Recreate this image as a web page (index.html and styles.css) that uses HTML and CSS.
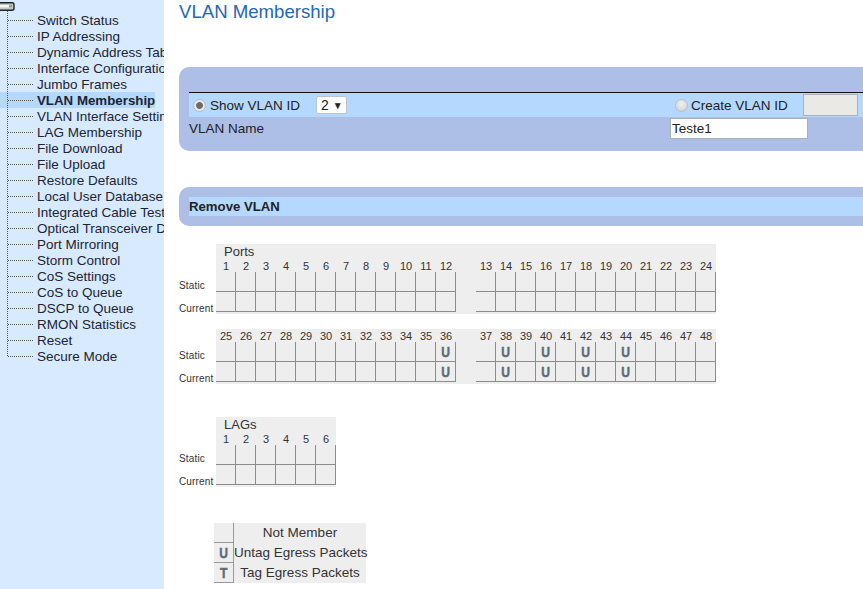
FILE: index.html
```html
<!DOCTYPE html>
<html lang="en">
<head>
<meta charset="utf-8">
<title>VLAN Membership</title>
<link rel="stylesheet" href="styles.css">
</head>
<body>
<div class="page">
  <nav class="sidebar">
    <svg class="root-icon" width="16" height="10" viewBox="0 0 16 10"><rect x="-3" y="0.8" width="17" height="7.4" rx="2" fill="#c4c8c4" stroke="#222" stroke-width="1.4"/><rect x="-1" y="3" width="13" height="2.4" fill="#f6f6f6"/><rect x="9" y="3" width="3" height="2.4" fill="#7fa58a"/></svg>
    <ul class="tree">
      <li class="item"><span class="branch"></span><span>Switch Status</span></li>
      <li class="item"><span class="branch"></span><span>IP Addressing</span></li>
      <li class="item"><span class="branch"></span><span>Dynamic Address Table</span></li>
      <li class="item"><span class="branch"></span><span>Interface Configuration</span></li>
      <li class="item"><span class="branch"></span><span>Jumbo Frames</span></li>
      <li class="item selected"><span class="branch"></span><span>VLAN Membership</span></li>
      <li class="item"><span class="branch"></span><span>VLAN Interface Settings</span></li>
      <li class="item"><span class="branch"></span><span>LAG Membership</span></li>
      <li class="item"><span class="branch"></span><span>File Download</span></li>
      <li class="item"><span class="branch"></span><span>File Upload</span></li>
      <li class="item"><span class="branch"></span><span>Restore Defaults</span></li>
      <li class="item"><span class="branch"></span><span>Local User Database</span></li>
      <li class="item"><span class="branch"></span><span>Integrated Cable Test</span></li>
      <li class="item"><span class="branch"></span><span>Optical Transceiver Diagnostics</span></li>
      <li class="item"><span class="branch"></span><span>Port Mirroring</span></li>
      <li class="item"><span class="branch"></span><span>Storm Control</span></li>
      <li class="item"><span class="branch"></span><span>CoS Settings</span></li>
      <li class="item"><span class="branch"></span><span>CoS to Queue</span></li>
      <li class="item"><span class="branch"></span><span>DSCP to Queue</span></li>
      <li class="item"><span class="branch"></span><span>RMON Statistics</span></li>
      <li class="item"><span class="branch"></span><span>Reset</span></li>
      <li class="item"><span class="branch"></span><span>Secure Mode</span></li>
    </ul>
  </nav>
  <main class="content">
    <h1 class="title">VLAN Membership</h1>

    <section class="panel panel-form">
      <div class="form-row form-row-top">
        <label class="field show-field"><input class="radio" type="radio" name="mode" checked><span>Show VLAN ID</span></label>
        <span class="fake-select">2 <span class="arrow">▼</span></span>
        <label class="field create-field"><input class="radio" type="radio" name="mode"><span>Create VLAN ID</span></label>
        <input class="id-input" type="text" disabled>
      </div>
      <div class="form-row form-row-name">
        <span class="name-label">VLAN Name</span>
        <input class="name-input" type="text" value="Teste1">
      </div>
    </section>

    <section class="panel panel-remove">
      <div class="remove-row">Remove VLAN</div>
    </section>

    <div class="matrix-row ports-top">
      <div class="labels"><span>Static</span><span>Current</span></div>
      <div class="matrix" id="ports1"></div>
    </div>
    <div class="matrix-row ports-bottom">
      <div class="labels"><span>Static</span><span>Current</span></div>
      <div class="matrix" id="ports2"></div>
    </div>
    <div class="matrix-row lags">
      <div class="labels"><span>Static</span><span>Current</span></div>
      <div class="matrix matrix-lag" id="lags"></div>
    </div>

    <div class="legend">
      <div class="swatch"></div><div class="legend-text">Not Member</div>
      <div class="swatch"><span class="glyph">U</span></div><div class="legend-text">Untag Egress Packets</div>
      <div class="swatch"><span class="glyph">T</span></div><div class="legend-text">Tag Egress Packets</div>
    </div>
  </main>
</div>
<script src="matrix.js"></script>
</body>
</html>
```
FILE: matrix.js
```js
function build(el, opts) {
  var html = '';
  if (opts.heading) html += '<div class="heading">' + opts.heading + '</div>';
  function line(fn) {
    opts.groups.forEach(function (g, gi) {
      if (gi) html += fn(null);
      g.forEach(function (n) { html += fn(n); });
    });
  }
  line(function (n) { return n === null ? '<div class="gap gap-num"></div>' : '<div class="num">' + n + '</div>'; });
  for (var r = 0; r < 2; r++) {
    line(function (n) {
      if (n === null) return '<div class="gap"></div>';
      var u = opts.untag && opts.untag.indexOf(n) >= 0;
      return '<div class="cell">' + (u ? '<span class="glyph">U</span>' : '') + '</div>';
    });
  }
  el.innerHTML = html;
}
function range(a, b) { var o = []; for (var i = a; i <= b; i++) o.push(i); return o; }
build(document.getElementById('ports1'), { heading: 'Ports', groups: [range(1, 12), range(13, 24)] });
build(document.getElementById('ports2'), { groups: [range(25, 36), range(37, 48)], untag: [36, 38, 40, 42, 44] });
build(document.getElementById('lags'), { heading: 'LAGs', groups: [range(1, 6)] });
```
FILE: styles.css
```css
* { box-sizing: border-box; }
html, body { margin: 0; padding: 0; height: 100%; overflow: hidden; background: #fff; }
body { font-family: "Liberation Sans", Arial, sans-serif; font-size: 13.5px; color: #222; }
.page { display: flex; width: 863px; height: 589px; overflow: hidden; }

.sidebar { flex: 0 0 164px; width: 164px; background: #d8eaff; overflow: hidden; color: #1c2430; }
.root-icon { display: block; margin-top: 2px; }
.tree { list-style: none; margin: 0; padding: 0; position: relative; }
.tree::before { content: ""; position: absolute; left: 7px; top: -1px; bottom: 8px; border-left: 1px dotted #555; }
.item { display: flex; align-items: center; height: 16px; width: max-content; white-space: nowrap; }
.branch { flex: none; width: 25px; margin: 0 4px 0 8px; border-bottom: 1px dotted #555; }
.selected { background: #b5d8ff; font-weight: 700; font-size: 13.3px; }

.content { flex: 1; min-width: 0; overflow: hidden; padding-left: 15px; }
.title { margin: 1px 0 0; height: 22px; font-size: 18.6px; line-height: 22px; font-weight: 400; color: #2468b4; white-space: nowrap; }

.panel { width: 760px; background: #adbfe6; border-radius: 10px 0 0 10px; padding-left: 10px; }
.panel-form { margin-top: 44px; height: 84px; padding-top: 25px; }
.form-row { display: flex; align-items: center; white-space: nowrap; }
.form-row-top { height: 25px; background: #b5d8ff; border-top: 1px solid #111; }
.form-row-name { height: 22px; }
.name-label { width: 481px; flex: none; }
.field { display: flex; align-items: center; }
.radio { appearance: none; -webkit-appearance: none; margin: 0; width: 13px; height: 13px; border-radius: 50%; border: 1px solid #b9bec4; background: radial-gradient(circle at 50% 35%, #f2f2f2, #c9ccd0); }
.radio:checked { background: radial-gradient(circle, #6a6a6a 0 3px, #e6e8ea 3.8px); }
.show-field { margin-left: 4px; width: 123px; gap: 4px; }
.fake-select { display: block; width: 31px; height: 18px; padding-left: 4px; line-height: 17px; font-size: 14px; background: #fff; border: 1px solid #bcc4cc; border-radius: 2px; }
.arrow { font-size: 10px; vertical-align: 1px; }
.create-field { margin-left: 328px; width: 128px; gap: 3px; }
.id-input { width: 55px; height: 22px; padding: 0; background: #ebe9e6; border: 1px solid #a9b1bb; }
.name-input { width: 138px; height: 21px; padding: 0 1px; font: inherit; color: #222; background: #fff; border: 1px solid #a9b1bb; }

.panel-remove { margin-top: 36px; height: 39px; padding-top: 10px; }
.remove-row { height: 19px; line-height: 19px; background: #b5d8ff; font-weight: 700; font-size: 13.2px; }

.matrix-row { display: flex; align-items: flex-end; }
.ports-top { margin-top: 18px; }
.ports-bottom { margin-top: 15px; }
.lags { margin-top: 33px; }
.labels { flex: 0 0 37px; display: flex; flex-direction: column; font-size: 10px; letter-spacing: .15px; color: #333; }
.labels span { height: 20px; line-height: 20px; white-space: nowrap; padding-top: 5px; }
.labels span:last-child { height: 23px; padding-top: 8px; }
.matrix { display: grid; grid-template-columns: repeat(25, 20px); background: #eee; padding-bottom: 2px; width: 500px; }
.matrix-lag { grid-template-columns: repeat(6, 20px); width: 120px; }
.heading { grid-column: 1 / -1; height: 15px; line-height: 15px; padding-left: 8px; font-size: 13px; color: #333; }
.num { height: 13px; line-height: 15px; font-size: 11px; text-align: center; color: #333; }
.gap { height: 20px; }
.gap-num { height: 13px; }
.cell { height: 20px; border-right: 1px solid #8c8c8c; border-bottom: 1px solid #8c8c8c; text-align: center; line-height: 19px; }
.glyph { display: inline-block; font-size: 15.5px; font-weight: 700; color: #5f6b75; transform: scaleX(.78); -webkit-text-stroke: .5px #5f6b75; }

.legend { margin: 36px 0 0 35px; display: grid; grid-template-columns: 20px 132px; grid-auto-rows: 20px; background: #eee; width: 152px; }
.swatch { border-right: 1px solid #9a9a9a; border-bottom: 1px solid #9a9a9a; text-align: center; line-height: 20px; }
.legend-text { text-align: center; line-height: 19px; color: #333; white-space: nowrap; }
```
